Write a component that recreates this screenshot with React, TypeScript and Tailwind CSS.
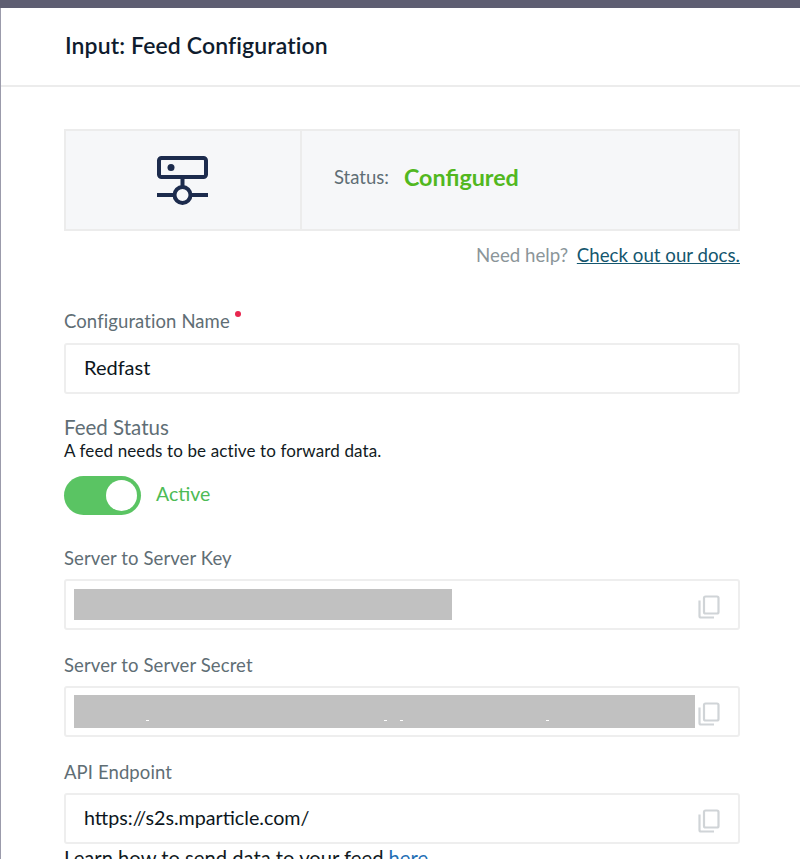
import React from 'react';

const font = "font-['Lato','Open_Sans',sans-serif]";

const CopyIcon = () => (
  <svg width="22" height="24" viewBox="0 0 22 24" fill="none" stroke="#d0d4d7" strokeWidth="2.2" className="shrink-0">
    <rect x="6" y="1.5" width="14.5" height="17" rx="1.5" />
    <path d="M1.5 5.5V21a1.5 1.5 0 0 0 1.5 1.5h13" />
  </svg>
);

const FeedIcon = () => (
  <svg width="52" height="50" viewBox="0 0 52 50" fill="none" stroke="#1c2b4d" strokeWidth="4">
    <rect x="2" y="2" width="47" height="19" rx="2.5" />
    <circle cx="14" cy="11.5" r="3.5" fill="#1c2b4d" stroke="none" />
    <path d="M25.5 21v9" />
    <circle cx="25.5" cy="39" r="8" />
    <path d="M0 39h17M34 39h17" />
  </svg>
);

const Label = ({ children }: { children: React.ReactNode }) => (
  <div className="text-[18.5px] leading-[22px] tracking-[0.1px] text-[#5f6e75]">{children}</div>
);

const Field = ({ children, right, className = 'mt-[10px]' }: { children?: React.ReactNode; right?: boolean; className?: string }) => (
  <div className={`${className} flex h-[51px] items-center rounded-[3px] border-2 border-[#eeeeee] bg-white`}>
    {children}
    {right && (
      <div className="ml-auto mr-[18px] pt-[4px]">
        <CopyIcon />
      </div>
    )}
  </div>
);

export default function App() {
  return (
    <div className={`${font} h-[859px] w-[800px] overflow-hidden bg-white`}>
      <div className="h-[8px] bg-[#5e5e72]" />
      <div className="h-[851px] border-l border-[#9b9bab]">
        <div className="flex h-[79px] items-center border-b-2 border-[#ececec] pl-[64px] pb-[3px]">
          <h1 className="text-[23px] font-semibold tracking-[0.12px] text-[#0f1c2e]">Input: Feed Configuration</h1>
        </div>

        <div className="pl-[63px] pr-[60px] pt-[42px]">
          <div className="flex h-[102px] border-2 border-[#ececec] bg-[#f6f7f9]">
            <div className="flex w-[236px] items-center justify-center border-r-2 border-[#ececec] pt-[2px]">
              <FeedIcon />
            </div>
            <div className="flex items-center pl-[32px] pb-[5px]">
              <span className="text-[18.5px] text-[#5f6e75]">Status:</span>
              <span className="ml-[15px] text-[23.3px] font-bold text-[#52b81f]">Configured</span>
            </div>
          </div>

          <div className="mt-[12px] text-right text-[18.7px] leading-[24px] text-[#8b9599]">
            Need help?{' '}
            <a className="ml-[4px] text-[#14566e] underline">Check out our docs.</a>
          </div>

          <div className="mt-[43px] flex">
            <Label>Configuration Name</Label>
            <span className="ml-[5px] mt-[1px] h-[6px] w-[6px] rounded-full bg-[#e8274f]" />
          </div>
          <Field className="mt-[11px]">
            <span className="pl-[18px] pb-[3px] text-[20px] text-[#0c1620]">Redfast</span>
          </Field>

          <div className="mt-[22px] text-[20.5px] leading-[22px] text-[#5f6e75]">Feed Status</div>
          <div className="mt-[2px] text-[17px] leading-[22px] tracking-[0.12px] text-[#111a22]">
            A feed needs to be active to forward data.
          </div>
          <div className="mt-[14px] flex items-center">
            <div className="flex h-[39px] w-[77px] items-center justify-end rounded-full bg-[#5ac463] pr-[4px]">
              <div className="h-[31px] w-[31px] rounded-full bg-white" />
            </div>
            <span className="ml-[15px] pb-[4px] text-[19.5px] text-[#4dbb55]">Active</span>
          </div>

          <div className="mt-[32px]">
            <Label>Server to Server Key</Label>
          </div>
          <Field right>
            <div className="ml-[8px] h-[31px] w-[378px] bg-[#c1c1c1]" />
          </Field>

          <div className="mt-[24px]">
            <Label>Server to Server Secret</Label>
          </div>
          <Field>
            <div className="relative ml-[8px] h-[33px] w-[621px] shrink-0 bg-[#c1c1c1]">
              <span className="absolute bottom-[7px] left-[72px] h-px w-[3px] bg-white" />
              <span className="absolute bottom-[7px] left-[310px] h-px w-[3px] bg-white" />
              <span className="absolute bottom-[7px] left-[326px] h-px w-[3px] bg-white" />
              <span className="absolute bottom-[7px] left-[472px] h-px w-[3px] bg-white" />
            </div>
            <div className="ml-[3px] pt-[4px]">
              <CopyIcon />
            </div>
          </Field>

          <div className="mt-[24px]">
            <Label>API Endpoint</Label>
          </div>
          <Field right>
            <span className="pl-[18px] pb-[2px] text-[19.7px] text-[#0c1620]">https://s2s.mparticle.com/</span>
          </Field>
          <div className="mt-[3px] text-[20.2px] leading-[22px] text-[#111a22]">
            Learn how to send data to your feed <a className="text-[#1f6fb5]">here</a>
          </div>
        </div>
      </div>
    </div>
  );
}
